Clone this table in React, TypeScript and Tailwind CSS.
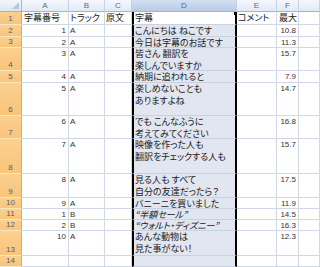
const cols = ['A', 'B', 'C', 'D', 'E', 'F', '']

type Row = {
    n: number
    a?: string
    b?: string
    d?: string[]
    f?: string
    italic?: boolean
}

const rows: Row[] = [
    { n: 1 },
    { n: 2, a: '1', b: 'A', d: ['こんにちは ねこです'], f: '10.8' },
    { n: 3, a: '2', b: 'A', d: ['今日は字幕のお話です'], f: '11.3' },
    { n: 4, a: '3', b: 'A', d: ['皆さん 翻訳を', '楽しんでいますか'], f: '15.7' },
    { n: 5, a: '4', b: 'A', d: ['納期に追われると'], f: '7.9' },
    { n: 6, a: '5', b: 'A', d: ['楽しめないことも', 'ありますよね'], f: '14.7' },
    { n: 7, a: '6', b: 'A', d: ['でも こんなふうに', '考えてみてください'], f: '16.8' },
    { n: 8, a: '7', b: 'A', d: ['映像を作った人も', '翻訳をチェックする人も'], f: '15.7' },
    { n: 9, a: '8', b: 'A', d: ['見る人も すべて', '自分の友達だったら？'], f: '17.5' },
    { n: 10, a: '9', b: 'A', d: ['バニーニを買いました'], f: '11.9' },
    { n: 11, a: '1', b: 'B', d: ['“半額セール”'], f: '14.5', italic: true },
    { n: 12, a: '2', b: 'B', d: ['“ウォルト・ディズニー”'], f: '16.3', italic: true },
    { n: 13, a: '10', b: 'A', d: ['あんな動物は', '見た事がない！'], f: '12.3' },
    { n: 14 },
]

const cell = 'border-r border-b border-[#d0d7e5] bg-white overflow-hidden whitespace-nowrap leading-[11px]'
const jp = "font-['Noto_Sans_CJK_JP',sans-serif] text-[9px] text-[#222] [font-feature-settings:'palt']"
const num = "font-['Liberation_Sans',sans-serif] text-[8px] text-[#333]"

export default function App() {
    return (
        <div className="w-[320px] h-[267px] overflow-hidden bg-white">
            <div className="grid grid-cols-[22px_47px_36px_27px_105px_40px_22px_1fr] grid-rows-[12px_13px_12px_11px_23px_12px_33px_23px_35px_24px_11px_11px_11px_25px_11px]">
                {/* corner */}
                <div className="relative border-r border-b border-[#9eb6ce] bg-gradient-to-b from-[#f4f7fc] to-[#dde6f2]">
                    <div className="absolute right-[2px] bottom-[2px] w-0 h-0 border-l-[7px] border-l-transparent border-b-[7px] border-b-[#b7c6db]" />
                </div>
                {cols.map((c, i) => (
                    <div
                        key={i}
                        className={`flex items-center justify-center border-r border-b border-b-[#9eb6ce] border-r-[#c5d2e3] font-['Liberation_Sans',sans-serif] text-[8px] text-[#5a6a82] ${c === 'D' ? 'bg-gradient-to-b from-[#d3e0f2] to-[#b8cbe5]' : 'bg-gradient-to-b from-[#f4f7fc] to-[#e2eaf5]'}`}
                    >
                        {c}
                    </div>
                ))}

                {rows.map((r) => (
                    <Line key={r.n} r={r} />
                ))}
            </div>
        </div>
    )
}

function Line({ r }: { r: Row }) {
    const head = r.n === 1
    const multi = (r.d?.length ?? 0) > 1
    return (
        <>
            <div className="flex items-end justify-center pb-[1px] border-r border-r-[#9eb6ce] border-b border-b-[#fde6bd] bg-gradient-to-b from-[#fbd08f] to-[#f8c57a] font-['Liberation_Sans',sans-serif] text-[8px] leading-[9px] text-[#4f5f7a]">
                {r.n}
            </div>
            <div className={`${cell} px-[2px] ${head ? `${jp} text-left` : `${num} text-right`}`}>
                {head ? '字幕番号' : r.a}
            </div>
            <div className={`${cell} px-[1px] ${head ? jp : num}`}>
                {head ? 'トラック' : r.b}
            </div>
            <div className={`${cell} px-[1px] ${jp}`}>{head ? '原文' : ''}</div>
            <div
                className={`relative overflow-hidden whitespace-nowrap border-x-2 border-x-black border-b border-b-[#c9d1e0] px-[1px] ${jp} ${multi ? 'leading-[12px]' : 'leading-[11px]'} ${head ? 'bg-white' : 'bg-[#e1e6f1]'} ${r.italic ? 'italic' : ''}`}
            >
                {head ? '字幕' : r.d?.map((t, i) => <div key={i}>{t}</div>)}
                {head && <div className="absolute right-[-2px] top-0 w-[3px] h-[3px] bg-black" />}
            </div>
            <div className={`${cell} px-[1px] ${jp}`}>{head ? 'コメント' : ''}</div>
            <div className={`${cell} px-[2px] ${head ? `${jp} text-left` : `${num} text-right`}`}>
                {head ? '最大' : r.f}
            </div>
            <div className={`${cell}`} />
        </>
    )
}
